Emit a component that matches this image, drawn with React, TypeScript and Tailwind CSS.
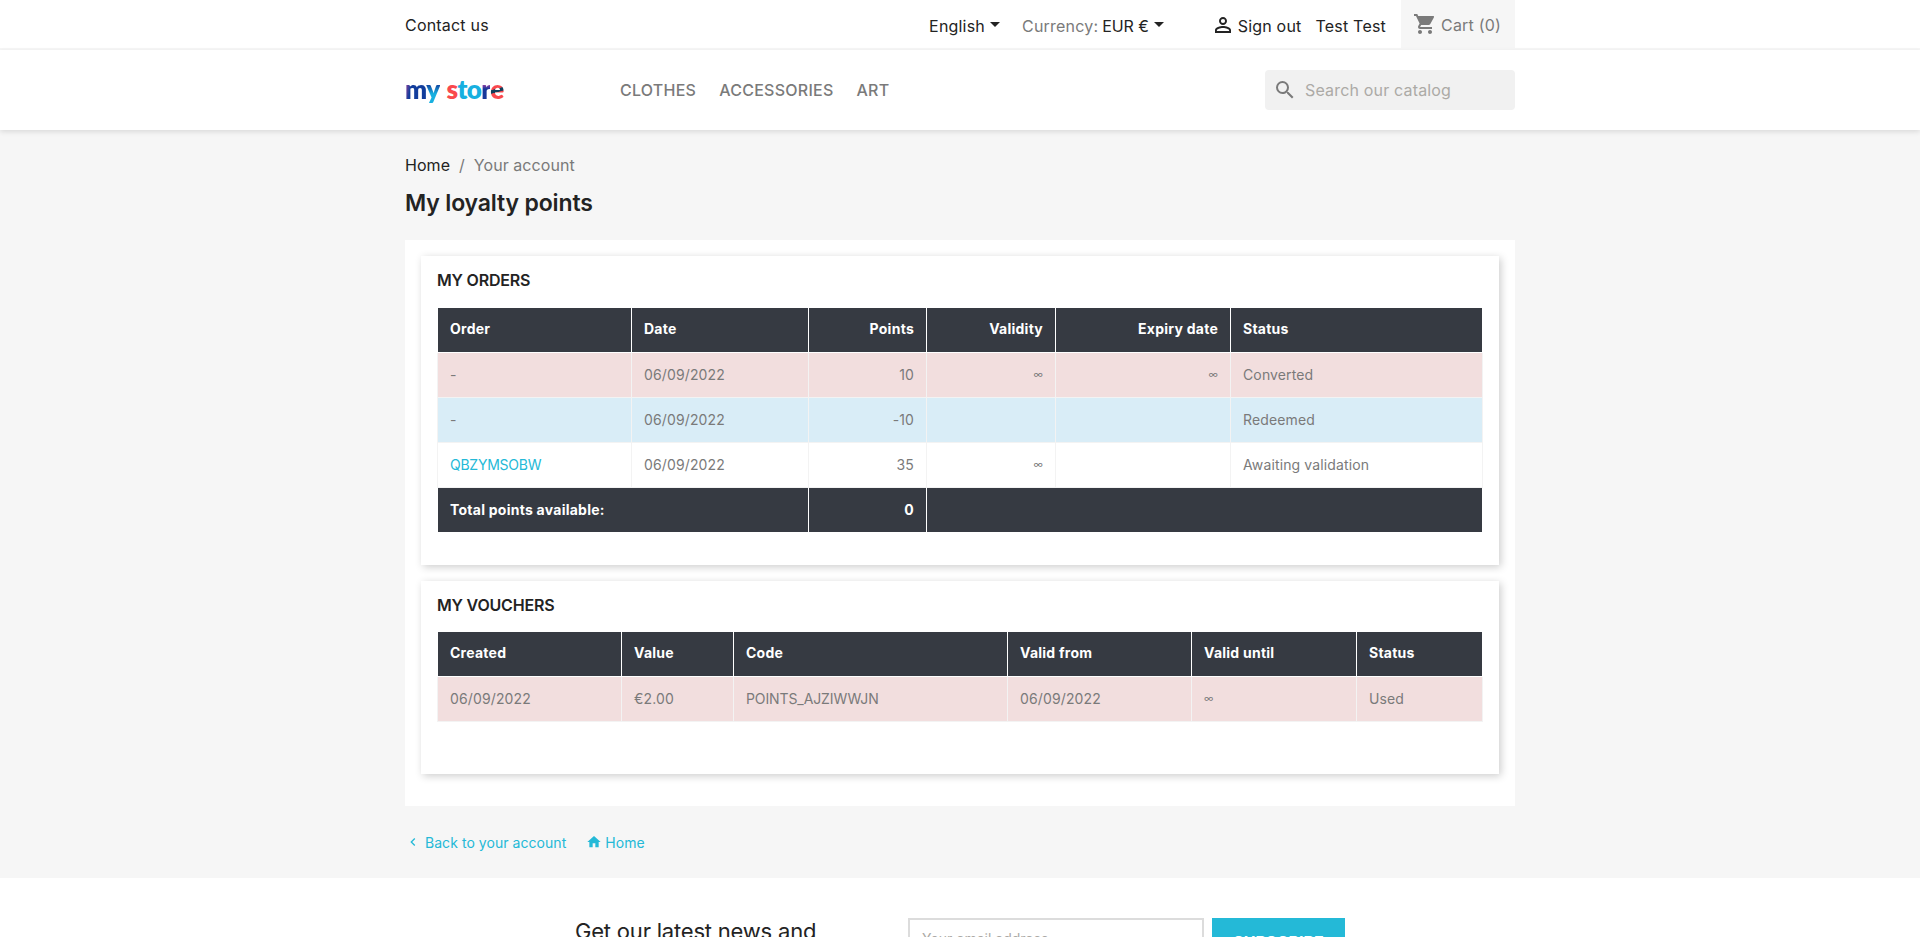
import { MdHome, MdKeyboardArrowLeft, MdPersonOutline, MdSearch, MdShoppingCart } from 'react-icons/md';

function Caret() {
  return <span className="ml-[5px] mb-[2px] inline-block border-x-[5px] border-t-[5px] border-x-transparent border-t-[#232323]" />;
}

function Logo() {
  return (
    <div className="mb-[3px] w-[215px] text-[26px] font-extrabold leading-none tracking-[-0.6px] font-['Lato',sans-serif]">
      <span className="bg-[linear-gradient(100deg,#d0459a_0%,#123d9c_30%,#123d9c_100%)] bg-clip-text text-transparent">m</span>
      <span className="bg-[linear-gradient(180deg,#123d9c_35%,#17b0e0_65%)] bg-clip-text text-transparent">y</span>
      <span className="ml-[7px] text-[#f9484d]">s</span>
      <span className="text-[#17b0e0]">to</span>
      <span className="bg-[linear-gradient(180deg,#a03fa8_35%,#17389a_50%)] bg-clip-text text-transparent">r</span>
      <span className="bg-[linear-gradient(165deg,#f9484d_48%,#12405c_50%,#12405c_58%,#f9484d_60%)] bg-clip-text text-transparent">e</span>
    </div>
  );
}

function TopBar() {
  return (
    <div className="h-[50px] border-b-2 border-[#f6f6f6] bg-white">
      <div className="mx-auto flex h-full w-[1110px] items-stretch text-[16px] tracking-[0.2px] text-[#232323]">
        <a className="mr-auto flex items-center pt-[2px]">Contact us</a>
        <div className="flex items-center pt-[3px]">
          <span>English</span>
          <Caret />
          <span className="ml-[22px] text-[#7a7a7a]">Currency:</span>
          <span className="ml-[4px] tracking-[-0.1px]">EUR €</span>
          <Caret />
          <MdPersonOutline className="mb-[2px] ml-[47px] text-[24px]" />
          <span className="ml-[3px]">Sign out</span>
          <span className="ml-[14px]">Test Test</span>
        </div>
        <div className="ml-[15px] flex w-[114px] items-center bg-[#f6f6f6] pl-[12px] text-[#7a7a7a]">
          <MdShoppingCart className="text-[24px]" />
          <span className="ml-[4px] pt-[1px]">Cart (0)</span>
        </div>
      </div>
    </div>
  );
}

function MainNav() {
  return (
    <div className="relative h-[80px] bg-white shadow-[0_2px_5px_rgba(0,0,0,0.11)]">
      <div className="mx-auto flex h-full w-[1110px] items-center">
        <Logo />
        <nav className="flex gap-[23px] text-[16px] font-medium tracking-[0.25px] text-[#7a7a7a]">
          <a>CLOTHES</a>
          <a>ACCESSORIES</a>
          <a>ART</a>
        </nav>
        <div className="ml-auto flex h-[40px] w-[250px] items-center rounded bg-[#f1f1f1] pl-[8px] text-[16px] tracking-[0.17px] text-[#acaaa6]">
          <MdSearch className="text-[24px] text-[#7a7a7a]" />
          <span className="ml-[8px]">Search our catalog</span>
        </div>
      </div>
    </div>
  );
}

const headCell = 'border border-white px-[12px] pb-[3px] font-bold tracking-[0.25px] text-white';
const totalCell = 'border border-white px-[12px] pb-[1px] font-bold tracking-[0.25px] text-white';
const bodyCell = 'border border-[#f3f3f3] px-[12px] pb-[1px] font-normal';
const infinity = 'text-[10px]';

function Card({ title, height, titleGap, children }: { title: string; height: string; titleGap: string; children: React.ReactNode }) {
  return (
    <section className={`bg-white px-[16px] pt-[14px] shadow-[2px_2px_8px_rgba(0,0,0,0.2)] ${height}`}>
      <h2 className={`h-[21px] text-[16px] leading-[21px] font-semibold tracking-[-0.2px] text-[#232323] ${titleGap}`}>{title}</h2>
      {children}
    </section>
  );
}

function OrdersTable() {
  return (
    <table className="w-full table-fixed border-collapse text-[14px] tracking-[0.13px] text-[#7a7a7a]">
      <colgroup>
        <col className="w-[194px]" />
        <col className="w-[177px]" />
        <col className="w-[118px]" />
        <col className="w-[129px]" />
        <col className="w-[175px]" />
        <col />
      </colgroup>
      <thead className="bg-[#363a42]">
        <tr className="h-[45px]">
          <th className={`${headCell} text-left`}>Order</th>
          <th className={`${headCell} text-left`}>Date</th>
          <th className={`${headCell} text-right`}>Points</th>
          <th className={`${headCell} text-right`}>Validity</th>
          <th className={`${headCell} text-right`}>Expiry date</th>
          <th className={`${headCell} text-left`}>Status</th>
        </tr>
      </thead>
      <tbody>
        <tr className="h-[45px] bg-[#f2dede]">
          <td className={bodyCell}>-</td>
          <td className={bodyCell}>06/09/2022</td>
          <td className={`${bodyCell} text-right`}>10</td>
          <td className={`${bodyCell} text-right ${infinity}`}>∞</td>
          <td className={`${bodyCell} text-right ${infinity}`}>∞</td>
          <td className={bodyCell}>Converted</td>
        </tr>
        <tr className="h-[45px] bg-[#d9edf7]">
          <td className={bodyCell}>-</td>
          <td className={bodyCell}>06/09/2022</td>
          <td className={`${bodyCell} text-right`}>-10</td>
          <td className={bodyCell}></td>
          <td className={bodyCell}></td>
          <td className={bodyCell}>Redeemed</td>
        </tr>
        <tr className="h-[45px]">
          <td className={`${bodyCell} tracking-[-0.25px] text-[#24b9d7]`}>QBZYMSOBW</td>
          <td className={bodyCell}>06/09/2022</td>
          <td className={`${bodyCell} text-right`}>35</td>
          <td className={`${bodyCell} text-right ${infinity}`}>∞</td>
          <td className={bodyCell}></td>
          <td className={bodyCell}>Awaiting validation</td>
        </tr>
        <tr className="h-[45px] bg-[#363a42]">
          <td colSpan={2} className={`${totalCell} text-left`}>Total points available:</td>
          <td className={`${totalCell} text-right`}>0</td>
          <td colSpan={3} className={totalCell}></td>
        </tr>
      </tbody>
    </table>
  );
}

function VouchersTable() {
  return (
    <table className="w-full table-fixed border-collapse text-[14px] tracking-[0.13px] text-[#7a7a7a]">
      <colgroup>
        <col className="w-[184px]" />
        <col className="w-[112px]" />
        <col className="w-[274px]" />
        <col className="w-[184px]" />
        <col className="w-[165px]" />
        <col />
      </colgroup>
      <thead className="bg-[#363a42]">
        <tr className="h-[45px]">
          <th className={`${headCell} text-left`}>Created</th>
          <th className={`${headCell} text-left`}>Value</th>
          <th className={`${headCell} text-left`}>Code</th>
          <th className={`${headCell} text-left`}>Valid from</th>
          <th className={`${headCell} text-left`}>Valid until</th>
          <th className={`${headCell} text-left`}>Status</th>
        </tr>
      </thead>
      <tbody>
        <tr className="h-[45px] bg-[#f2dede]">
          <td className={bodyCell}>06/09/2022</td>
          <td className={bodyCell}>€2.00</td>
          <td className={`${bodyCell} tracking-[-0.1px]`}>POINTS_AJZIWWJN</td>
          <td className={bodyCell}>06/09/2022</td>
          <td className={`${bodyCell} ${infinity}`}>∞</td>
          <td className={bodyCell}>Used</td>
        </tr>
      </tbody>
    </table>
  );
}

export default function App() {
  return (
    <div className="bg-[#f6f6f6] font-['Inter',sans-serif]">
      <TopBar />
      <MainNav />
      <main className="mx-auto w-[1110px]">
        <div className="flex h-[47px] items-end text-[16px] leading-[24px] tracking-[0.05px] text-[#232323]">
          <span>Home</span>
          <span className="mx-[9px] text-[#7a7a7a]">/</span>
          <span className="text-[#7a7a7a]">Your account</span>
        </div>
        <h1 className="mt-[10px] mb-[21px] h-[32px] text-[23px] leading-[32px] font-semibold tracking-[-0.15px] text-[#232323]">My loyalty points</h1>
        <div className="flex h-[566px] flex-col gap-[16px] bg-white px-[16px] pt-[16px]">
          <Card title="MY ORDERS" height="h-[309px]" titleGap="mb-[16px]">
            <OrdersTable />
          </Card>
          <Card title="MY VOUCHERS" height="h-[193px]" titleGap="mb-[15px]">
            <VouchersTable />
          </Card>
        </div>
        <div className="flex h-[72px] items-center text-[14px] tracking-[0.05px] text-[#24b9d7]">
          <MdKeyboardArrowLeft className="text-[16px]" />
          <a className="ml-[4px]">Back to your account</a>
          <MdHome className="ml-[20px] text-[16px]" />
          <a className="ml-[3px]">Home</a>
        </div>
      </main>
      <footer className="bg-white pt-[40px] pb-[40px]">
        <div className="mx-auto flex w-[770px] items-start">
          <p className="mt-[-2px] mr-[43px] w-[290px] text-[22px] leading-[30px] tracking-[-0.2px] text-[#232323]">Get our latest news and special sales</p>
          <div className="h-[48px] w-[296px] border-2 border-[#dcdcdc] px-[12px] pt-[8px] text-[14px] text-[#acaaa6]">Your email address</div>
          <button className="ml-[8px] h-[48px] w-[133px] bg-[#24b9d7] text-[16px] font-bold text-white">SUBSCRIBE</button>
        </div>
      </footer>
    </div>
  );
}
